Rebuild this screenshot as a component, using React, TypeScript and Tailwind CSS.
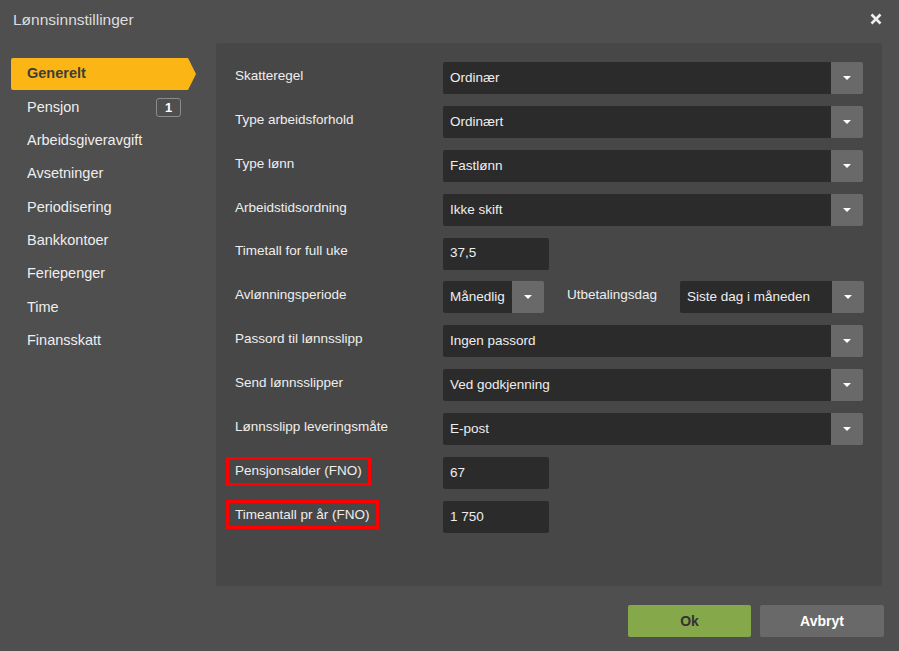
import type { ReactNode } from 'react';

type NavItem = { label: string; badge?: number };

const NAV: NavItem[] = [
  { label: 'Generelt' },
  { label: 'Pensjon', badge: 1 },
  { label: 'Arbeidsgiveravgift' },
  { label: 'Avsetninger' },
  { label: 'Periodisering' },
  { label: 'Bankkontoer' },
  { label: 'Feriepenger' },
  { label: 'Time' },
  { label: 'Finansskatt' },
];

const FONT = { fontFamily: '"Liberation Sans", Arial, sans-serif' };

function Caret() {
  return <span className="block w-0 h-0 border-t-[4px] border-t-white border-x-[4px] border-x-transparent" />;
}

/** Dark select box with the grey caret button on the right. */
function Select({ value, width }: { value: string; width: string }) {
  return (
    <div className={`flex h-[32px] rounded-[2px] overflow-hidden ${width}`}>
      <div className="flex-1 min-w-0 bg-[#2b2b2b] pl-[7px] flex items-center text-[13.5px] text-[#eeeeee] whitespace-nowrap">
        {value}
      </div>
      <div className="w-[32px] bg-[#696969] flex items-center justify-center">
        <Caret />
      </div>
    </div>
  );
}

function TextInput({ value }: { value: string }) {
  return (
    <div className="w-[106px] h-[32px] rounded-[2px] bg-[#2b2b2b] pl-[7px] flex items-center text-[13.5px] text-[#eeeeee]">
      {value}
    </div>
  );
}

function Row({ label, flagged, children }: { label: string; flagged?: boolean; children: ReactNode }) {
  return (
    <div className="flex items-start h-[32px]">
      <div className="w-[208px] h-[28px] flex items-center text-[13.5px] text-[#eeeeee]">
        {flagged ? (
          <span className="-ml-[9px] border-[3px] border-[#ff0000] px-[6px] h-[29px] flex items-center">
            {label}
          </span>
        ) : (
          label
        )}
      </div>
      {children}
    </div>
  );
}

export default function App() {
  return (
    <div className="w-[899px] h-[651px] bg-[#4f4f4f] flex flex-col overflow-hidden" style={FONT}>
      {/* title bar */}
      <div className="h-[43px] flex items-start justify-between pl-[13px] pr-[17px] pt-[8px]">
        <span className="text-[15.5px] text-[#dddddd]">Lønnsinnstillinger</span>
        <svg width="12" height="12" viewBox="0 0 12 12" className="mt-[5px]">
          <path d="M1.5 1.5 L10.5 10.5 M10.5 1.5 L1.5 10.5" stroke="#eeeeee" strokeWidth="2.6" />
        </svg>
      </div>

      <div className="flex">
        {/* left navigation */}
        <nav className="w-[216px] pt-[14.3px] pl-[11px]">
          {NAV.map((item, i) =>
            i === 0 ? (
              <div key={item.label} className="h-[33.4px] flex items-center">
                <div className="h-[32px] w-[177px] bg-[#fbb515] rounded-l-[2px] pl-[16px] flex items-center text-[14.5px] font-bold text-[#3d3d3d]">
                  {item.label}
                </div>
                <span className="w-0 h-0 border-l-[8px] border-l-[#fbb515] border-y-[16px] border-y-transparent" />
              </div>
            ) : (
              <div key={item.label} className="h-[33.4px] flex items-center pl-[16px] pr-[35px] text-[14.5px] text-[#eeeeee]">
                <span className="flex-1">{item.label}</span>
                {item.badge != null && (
                  <span className="w-[25px] h-[19px] border border-[#8c8c8c] rounded-[3px] flex items-center justify-center text-[13px] font-bold text-white">
                    {item.badge}
                  </span>
                )}
              </div>
            ),
          )}
        </nav>

        {/* settings panel */}
        <section className="w-[666px] h-[543px] bg-[#474747] rounded-[3px] pt-[19px] pl-[19px] flex flex-col gap-[11.9px]">
          <Row label="Skatteregel">
            <Select value="Ordinær" width="w-[420px]" />
          </Row>
          <Row label="Type arbeidsforhold">
            <Select value="Ordinært" width="w-[420px]" />
          </Row>
          <Row label="Type lønn">
            <Select value="Fastlønn" width="w-[420px]" />
          </Row>
          <Row label="Arbeidstidsordning">
            <Select value="Ikke skift" width="w-[420px]" />
          </Row>
          <Row label="Timetall for full uke">
            <TextInput value="37,5" />
          </Row>
          <Row label="Avlønningsperiode">
            <Select value="Månedlig" width="w-[101px]" />
            <span className="ml-[23px] w-[113px] h-[28px] flex items-center text-[13.5px] text-[#eeeeee]">
              Utbetalingsdag
            </span>
            <Select value="Siste dag i måneden" width="w-[184px]" />
          </Row>
          <Row label="Passord til lønnsslipp">
            <Select value="Ingen passord" width="w-[420px]" />
          </Row>
          <Row label="Send lønnsslipper">
            <Select value="Ved godkjenning" width="w-[420px]" />
          </Row>
          <Row label="Lønnsslipp leveringsmåte">
            <Select value="E-post" width="w-[420px]" />
          </Row>
          <Row label="Pensjonsalder (FNO)" flagged>
            <TextInput value="67" />
          </Row>
          <Row label="Timeantall pr år (FNO)" flagged>
            <TextInput value="1 750" />
          </Row>
        </section>
      </div>

      {/* footer buttons */}
      <div className="flex justify-end gap-[9px] pr-[15px] pt-[19px]">
        <button className="w-[123px] h-[32px] rounded-[2px] bg-[#85a84b] text-[14px] font-bold text-[#333333]">Ok</button>
        <button className="w-[124px] h-[32px] rounded-[2px] bg-[#696969] text-[14px] font-bold text-white">Avbryt</button>
      </div>
    </div>
  );
}
